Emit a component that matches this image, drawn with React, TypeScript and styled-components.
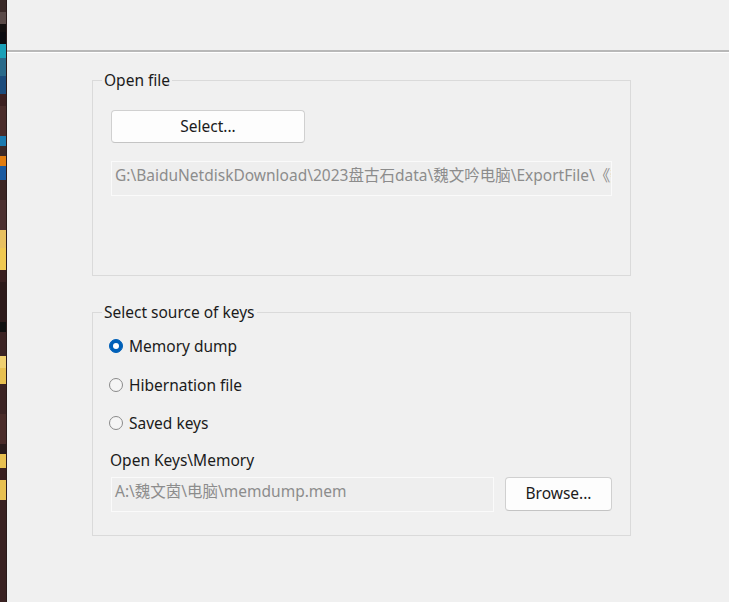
import React from "react";
import styled, { createGlobalStyle } from "styled-components";

const Global = createGlobalStyle`
  html, body { margin: 0; padding: 0; background: #f0f0f0; }
  body { font-family: "Noto Sans", "Noto Sans CJK SC", sans-serif; font-size: 15.5px; color: #1b1b1b; }
  * { box-sizing: border-box; }
`;

const Screen = styled.div`
  display: flex;
  width: 729px;
  height: 602px;
  overflow: hidden;
`;

const Desktop = styled.div`
  width: 7px;
  flex: none;
  display: flex;
  flex-direction: column;
  border-right: 1px solid #2a1a1a;
`;

const Strip = styled.div<{ $h: number; $c: string }>`
  flex: ${(p) => p.$h} 1 0;
  background: ${(p) => p.$c};
`;

const Window = styled.div`
  flex: 1;
  display: flex;
  flex-direction: column;
  background: #f0f0f0;
`;

const TopArea = styled.div`
  height: 50px;
  flex: none;
`;

const Separator = styled.div`
  height: 3px;
  border-top: 2px solid #b8b8b8;
  border-bottom: 1px solid #ffffff;
  flex: none;
`;

const Body = styled.div`
  display: flex;
  flex-direction: column;
  padding: 18px 0 0 85px;
  gap: 27px;
`;

const Group = styled.fieldset<{ $h: number }>`
  margin: 0;
  width: 539px;
  height: ${(p) => p.$h}px;
  border: 1px solid #dadada;
  padding: 0;
  display: flex;
  flex-direction: column;
`;

const Legend = styled.legend`
  margin-left: 9px;
  padding: 0 2px;
  line-height: 18px;
  font-size: 15.5px;
  color: #1b1b1b;
`;

const Button = styled.button<{ $w: number; $h: number }>`
  width: ${(p) => p.$w}px;
  height: ${(p) => p.$h}px;
  background: #fdfdfd;
  border: 1px solid #d0d0d0;
  border-bottom-color: #c4c4c4;
  border-radius: 4px;
  font-family: inherit;
  font-size: 15.5px;
  color: #1b1b1b;
  padding: 0 0 2px;
  flex: none;
`;

const Field = styled.div<{ $w: number }>`
  width: ${(p) => p.$w}px;
  height: 35px;
  border: 1px solid #fafafa;
  background: #eeeeee;
  color: #8c8c8c;
  font-size: 15.5px;
  line-height: 27px;
  padding-left: 3px;
  white-space: nowrap;
  overflow: hidden;
  flex: none;
`;

const OpenFileContent = styled.div`
  display: flex;
  flex-direction: column;
  gap: 18px;
  padding: 21px 0 0 18px;
`;

const KeysContent = styled.div`
  display: flex;
  flex-direction: column;
  padding: 0 0 0 17px;
`;

const RadioList = styled.div`
  display: flex;
  flex-direction: column;
  padding-top: 6px;
`;

const RadioRow = styled.label`
  height: 38.5px;
  display: flex;
  align-items: center;
  gap: 6px;
  font-size: 15.5px;
`;

const RadioDot = styled.span<{ $on?: boolean }>`
  width: 14px;
  height: 14px;
  border-radius: 50%;
  flex: none;
  margin-left: -1px;
  ${(p) =>
    p.$on
      ? `background: #0060b8; border: 1px solid #0060b8; display:flex; align-items:center; justify-content:center;
         &::after { content: ""; width: 6px; height: 6px; border-radius: 50%; background: #fff; }`
      : `background: #f5f5f5; border: 1px solid #8a8a8a;`}
`;

const FieldLabel = styled.div`
  line-height: 20px;
  margin-top: 7px;
  font-size: 15.5px;
`;

const KeyRow = styled.div`
  display: flex;
  align-items: flex-start;
  gap: 11px;
  margin-top: 7px;
  padding-left: 1px;
`;

const strips: [number, string][] = [
  [12, "#3a2a28"],
  [12, "#5a4a48"],
  [8, "#141010"],
  [12, "#0c0c10"],
  [14, "#1aa0b8"],
  [18, "#2a6a8a"],
  [18, "#1c4c7c"],
  [12, "#3c2020"],
  [30, "#4a2c2a"],
  [10, "#1a7ab0"],
  [10, "#3c2a28"],
  [10, "#e07c10"],
  [14, "#1a5aa0"],
  [20, "#3c2624"],
  [30, "#4c3030"],
  [18, "#e8c060"],
  [22, "#f0c850"],
  [12, "#3a2020"],
  [40, "#2c1a1a"],
  [10, "#101010"],
  [24, "#3c2424"],
  [12, "#f0d070"],
  [16, "#e8c050"],
  [30, "#3c2424"],
  [30, "#4a2c2a"],
  [10, "#2a1c1c"],
  [14, "#e8c050"],
  [12, "#3a2020"],
  [20, "#e8c050"],
  [102, "#3a2222"],
];

export default function App() {
  return (
    <>
      <Global />
      <Screen>
        <Desktop>
          {strips.map(([h, c], i) => (
            <Strip key={i} $h={h} $c={c} />
          ))}
        </Desktop>
        <Window>
          <TopArea />
          <Separator />
          <Body>
            <Group $h={205}>
              <Legend>Open file</Legend>
              <OpenFileContent>
                <Button $w={194} $h={33}>Select...</Button>
                <Field $w={501}>
                  G:\BaiduNetdiskDownload\2023盘古石data\魏文吟电脑\ExportFile\《魏文吟》
                </Field>
              </OpenFileContent>
            </Group>
            <Group $h={233}>
              <Legend>Select source of keys</Legend>
              <KeysContent>
                <RadioList>
                  <RadioRow>
                    <RadioDot $on />
                    Memory dump
                  </RadioRow>
                  <RadioRow>
                    <RadioDot />
                    Hibernation file
                  </RadioRow>
                  <RadioRow>
                    <RadioDot />
                    Saved keys
                  </RadioRow>
                </RadioList>
                <FieldLabel>Open Keys\Memory</FieldLabel>
                <KeyRow>
                  <Field $w={383}>A:\魏文茵\电脑\memdump.mem</Field>
                  <Button $w={107} $h={34}>Browse...</Button>
                </KeyRow>
              </KeysContent>
            </Group>
          </Body>
        </Window>
      </Screen>
    </>
  );
}
